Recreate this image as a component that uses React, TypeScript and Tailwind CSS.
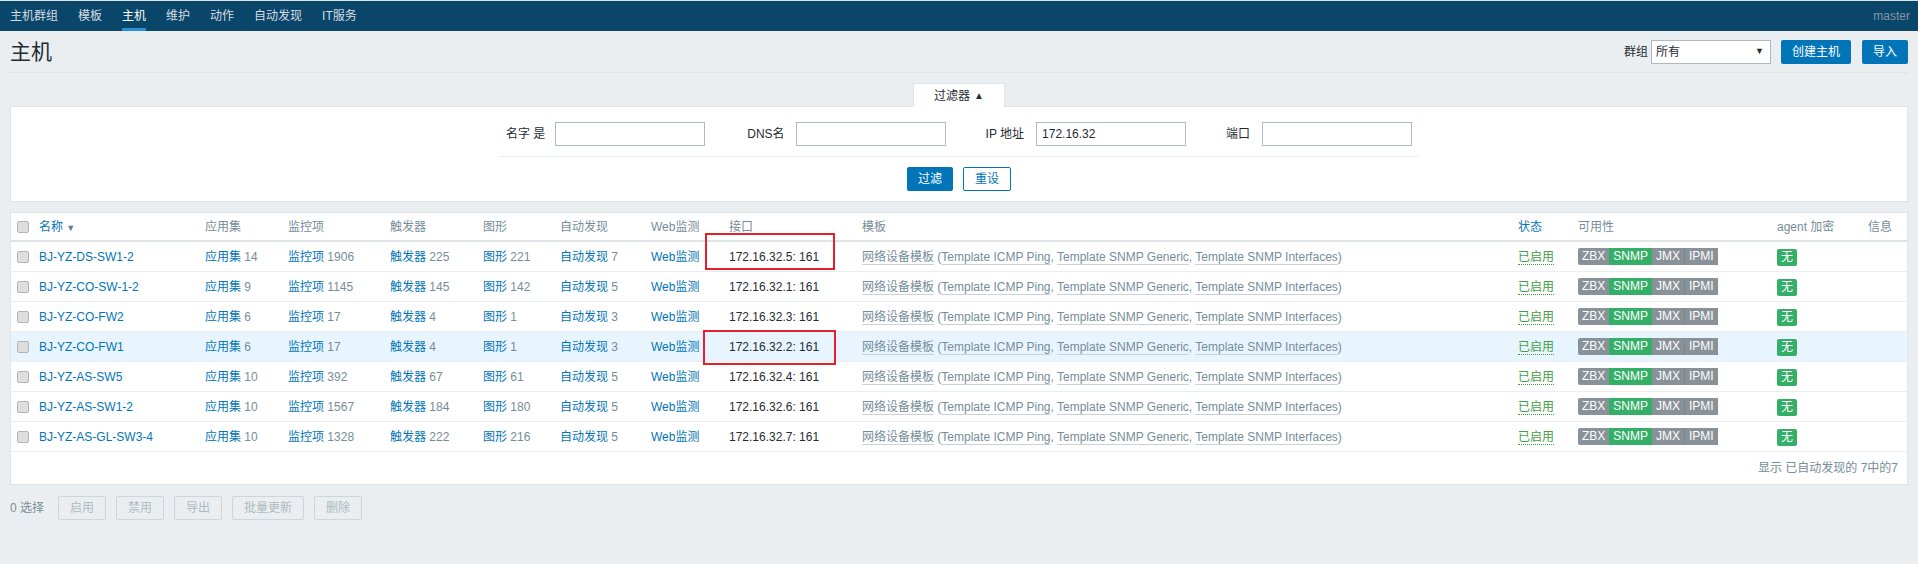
import React from 'react';

const font = "font-['Liberation_Sans','Noto_Sans_CJK_SC',sans-serif]";

const hosts = [
  { name: 'BJ-YZ-DS-SW1-2', apps: 14, items: 1906, triggers: 225, graphs: 221, disc: 7, ip: '172.16.32.5: 161' },
  { name: 'BJ-YZ-CO-SW-1-2', apps: 9, items: 1145, triggers: 145, graphs: 142, disc: 5, ip: '172.16.32.1: 161' },
  { name: 'BJ-YZ-CO-FW2', apps: 6, items: 17, triggers: 4, graphs: 1, disc: 3, ip: '172.16.32.3: 161' },
  { name: 'BJ-YZ-CO-FW1', apps: 6, items: 17, triggers: 4, graphs: 1, disc: 3, ip: '172.16.32.2: 161' },
  { name: 'BJ-YZ-AS-SW5', apps: 10, items: 392, triggers: 67, graphs: 61, disc: 5, ip: '172.16.32.4: 161' },
  { name: 'BJ-YZ-AS-SW1-2', apps: 10, items: 1567, triggers: 184, graphs: 180, disc: 5, ip: '172.16.32.6: 161' },
  { name: 'BJ-YZ-AS-GL-SW3-4', apps: 10, items: 1328, triggers: 222, graphs: 216, disc: 5, ip: '172.16.32.7: 161' },
];

const navItems = ['主机群组', '模板', '主机', '维护', '动作', '自动发现', 'IT服务'];

const cols =
  'grid grid-cols-[23px_166px_83px_102px_93px_77px_91px_78px_133px_656px_60px_199px_91px_44px]';

const Checkbox = () => (
  <div className="w-[12px] h-[12px] rounded-[2px] border border-[#b4b4b4] bg-[#dedede]" />
);

const Count = ({ label, n }: { label: string; n?: number }) => (
  <span className="whitespace-nowrap">
    <span className="text-[#0275b8]">{label}</span>
    {n !== undefined && <span className="text-[#768d99]"> {n}</span>}
  </span>
);

const Tpl = ({ children }: { children: React.ReactNode }) => (
  <span className="border-b border-[#c9d2d7]">{children}</span>
);

const Availability = () => (
  <div className="flex h-[17px] leading-[17px] text-white rounded-[2px] overflow-hidden">
    <span className="px-[4px] bg-[#899298]">ZBX</span>
    <span className="px-[4px] bg-[#34af67]">SNMP</span>
    <span className="px-[4px] bg-[#899298] border-r border-[#7d868c]">JMX</span>
    <span className="px-[4px] bg-[#899298]">IPMI</span>
  </div>
);

const App = () => {
  return (
    <div className={`${font} min-h-screen bg-[#ebeef0] text-[12px] text-[#1f2c33]`}>
      {/* Top nav */}
      <div className="h-px bg-[#dfe4e7]" />
      <div className="h-[30px] bg-[#0a466a] flex items-stretch justify-between">
        <div className="flex">
          {navItems.map(item => (
            <div key={item} className="px-[10px] flex">
              <span
                className={`flex items-center pt-[3px] border-b-[3px] ${
                  item === '主机' ? 'text-white border-[#2b8fd6]' : 'text-[#d4dde2] border-transparent'
                }`}
              >
                {item}
              </span>
            </div>
          ))}
        </div>
        <div className="flex items-center pr-[8px] text-[#8596a1]">master</div>
      </div>

      {/* Title row */}
      <div className="mx-[10px] h-[42px] border-b border-[#dfe4e7] flex items-center justify-between">
        <h1 className="text-[21px] leading-none text-[#1f2c33]">主机</h1>
        <div className="flex items-center">
          <span className="mr-[3px]">群组</span>
          <div className="w-[120px] h-[24px] border border-[#acbbc2] bg-white flex items-center justify-between pl-[4px] pr-[6px]">
            <span>所有</span>
            <span className="text-[9px]">▼</span>
          </div>
          <button className="ml-[10px] h-[24px] px-[11px] rounded-[2px] bg-[#0275b8] text-white">创建主机</button>
          <button className="ml-[11px] h-[24px] px-[11px] rounded-[2px] bg-[#0275b8] text-white">导入</button>
        </div>
      </div>

      {/* Filter */}
      <div className="mt-[10px] flex justify-center">
        <div className="relative z-10 -mb-px h-[24px] w-[92px] border-x border-t border-[#dfe4e7] bg-white flex items-center justify-center">
          过滤器 <span className="ml-[4px] text-[10px]">▲</span>
        </div>
      </div>
      <div className="mx-[10px] border border-[#dfe4e7] bg-white pt-[15px] pb-[10px]">
        <div className="flex justify-center items-center">
          <span>名字 是</span>
          <input className="ml-[10px] w-[150px] h-[24px] border border-[#acbbc2] outline-none" />
          <span className="ml-[42px]">DNS名</span>
          <input className="ml-[11px] w-[150px] h-[24px] border border-[#acbbc2] outline-none" />
          <span className="ml-[40px]">IP 地址</span>
          <input
            className="ml-[12px] w-[150px] h-[24px] border border-[#acbbc2] px-[5px] outline-none"
            defaultValue="172.16.32"
          />
          <span className="ml-[40px]">端口</span>
          <input className="ml-[12px] w-[150px] h-[24px] border border-[#acbbc2] outline-none" />
        </div>
        <div className="mx-auto mt-[10px] w-[919px] border-t border-[#ebeef0]" />
        <div className="mt-[10px] flex justify-center gap-[10px]">
          <button className="h-[24px] px-[11px] rounded-[2px] bg-[#0275b8] text-white">过滤</button>
          <button className="h-[24px] px-[11px] rounded-[2px] border border-[#0275b8] text-[#0275b8] bg-white">重设</button>
        </div>
      </div>

      {/* Hosts table */}
      <div className="mx-[10px] mt-[10px] border border-[#dfe4e7] bg-white">
        <div className={`${cols} h-[29px] items-center border-b-2 border-[#dfe4e7] text-[#768d99]`}>
          <div className="flex justify-center"><Checkbox /></div>
          <div className="px-[5px] text-[#0275b8]">
            名称 <span className="text-[9px] text-[#5d7d94]">▼</span>
          </div>
          <div className="px-[5px]">应用集</div>
          <div className="px-[5px]">监控项</div>
          <div className="px-[5px]">触发器</div>
          <div className="px-[5px]">图形</div>
          <div className="px-[5px]">自动发现</div>
          <div className="px-[5px]">Web监测</div>
          <div className="px-[5px]">接口</div>
          <div className="px-[5px]">模板</div>
          <div className="px-[5px] text-[#0275b8]">状态</div>
          <div className="px-[5px]">可用性</div>
          <div className="px-[5px]">agent 加密</div>
          <div className="px-[5px]">信息</div>
        </div>

        {hosts.map((h, i) => (
          <div
            key={h.name}
            className={`${cols} h-[30px] items-center border-b border-[#ebeef0] ${i === 3 ? 'bg-[#e8f5ff]' : ''}`}
          >
            <div className="flex justify-center"><Checkbox /></div>
            <div className="px-[5px] text-[#0275b8]">{h.name}</div>
            <div className="px-[5px]"><Count label="应用集" n={h.apps} /></div>
            <div className="px-[5px]"><Count label="监控项" n={h.items} /></div>
            <div className="px-[5px]"><Count label="触发器" n={h.triggers} /></div>
            <div className="px-[5px]"><Count label="图形" n={h.graphs} /></div>
            <div className="px-[5px]"><Count label="自动发现" n={h.disc} /></div>
            <div className="px-[5px]"><Count label="Web监测" /></div>
            <div className="px-[5px] relative">
              {h.ip}
              {i === 0 && (
                <div className="absolute left-[-19px] top-[-15px] w-[130px] h-[37px] border-2 border-[#e3202b]" />
              )}
              {i === 3 && (
                <div className="absolute left-[-21px] top-[-8px] w-[133px] h-[35px] border-2 border-[#e3202b]" />
              )}
            </div>
            <div className="px-[5px] whitespace-nowrap text-[#768d99]">
              <Tpl>网络设备模板</Tpl> (<Tpl>Template ICMP Ping</Tpl>, <Tpl>Template SNMP Generic</Tpl>,{' '}
              <Tpl>Template SNMP Interfaces</Tpl>)
            </div>
            <div className="px-[5px]">
              <span className="text-[#429e47] border-b border-dotted border-[#429e47]">已启用</span>
            </div>
            <div className="px-[5px]"><Availability /></div>
            <div className="px-[5px]">
              <span className="inline-block h-[17px] leading-[17px] px-[4px] rounded-[2px] bg-[#34af67] text-white">无</span>
            </div>
            <div className="px-[5px]" />
          </div>
        ))}

        <div className="h-[32px] flex items-center justify-end pr-[9px] text-[#768d99]">
          显示 已自动发现的 7中的7
        </div>
      </div>

      {/* Bulk actions */}
      <div className="mt-[11px] mx-[10px] flex items-center gap-[10px] pb-[20px]">
        <span className="text-[#768d99] mr-[4px]">0 选择</span>
        {['启用', '禁用', '导出', '批量更新', '删除'].map(b => (
          <button
            key={b}
            className="h-[24px] px-[11px] rounded-[2px] border border-[#cfd6da] text-[#acbbc2]"
          >
            {b}
          </button>
        ))}
      </div>
    </div>
  );
};

export default App;
